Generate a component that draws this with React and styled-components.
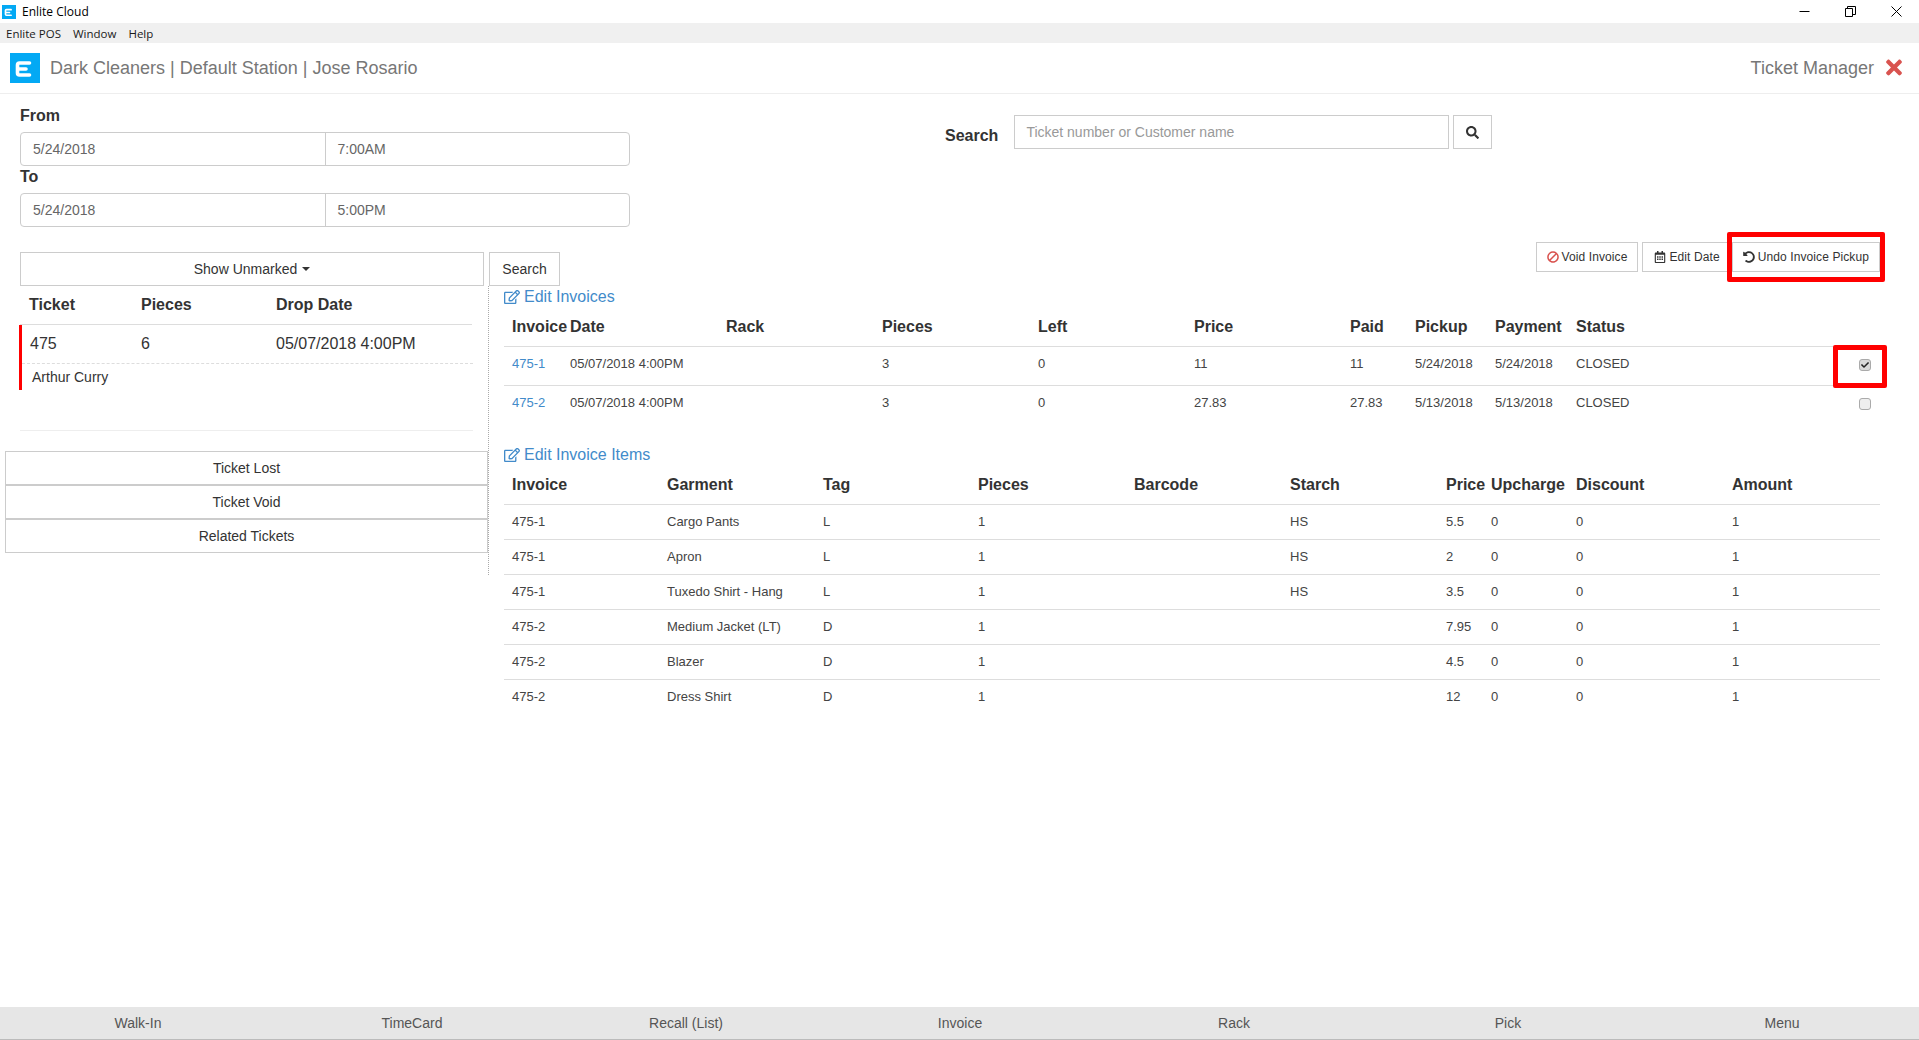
import React from "react";
import styled, { createGlobalStyle } from "styled-components";
import { FaBan, FaCheck, FaRegCalendarAlt, FaRegEdit, FaSearch, FaTimes, FaUndoAlt } from "react-icons/fa";

const GlobalStyle = createGlobalStyle`
  html, body { margin: 0; padding: 0; height: 100%; overflow: hidden; background: #fff; }
  * { box-sizing: border-box; }
  body {
    font-family: "Liberation Sans", Arial, sans-serif;
    font-size: 14px;
    color: #333;
  }
`;

const Page = styled.div`
  display: flex;
  flex-direction: column;
  height: 1040px;
`;

const TitleBar = styled.div`
  display: flex;
  align-items: center;
  height: 23px;
  padding-left: 2px;
  font-family: "Open Sans", "Noto Sans", sans-serif;
  font-size: 12px;
  color: #000;
`;

const TitleText = styled.span`
  margin-left: 6px;
  flex: 1;
`;

const WindowControl = styled.span`
  display: flex;
  justify-content: center;
  width: 46px;
`;

const MenuBar = styled.div`
  display: flex;
  align-items: center;
  gap: 12px;
  height: 20px;
  padding-left: 6px;
  background: #f0f0f0;
  font-family: "Open Sans", "Noto Sans", sans-serif;
  font-size: 11.5px;
  color: #1a1a1a;
`;

const Header = styled.div`
  display: flex;
  align-items: center;
  height: 51px;
  padding: 0 17px 0 10px;
  border-bottom: 1px solid #eee;
  font-size: 18px;
  color: #777;
`;

const HeaderTitle = styled.span`
  margin-left: 10px;
  flex: 1;
`;

const CloseIcon = styled(FaTimes)`
  margin: -2px 0 0 12px;
  width: 16px;
  height: 23px;
  color: #d9534f;
`;

const TopRow = styled.div`
  display: flex;
  align-items: flex-start;
  padding: 11px 0 0 20px;
`;

const DateFilters = styled.div`
  width: 610px;
`;

const Label = styled.div`
  font-size: 16px;
  font-weight: bold;
  line-height: 21px;
`;

const FieldGroup = styled.div`
  display: flex;
  height: 34px;
  margin: 6px 0 0;
  border: 1px solid #ccc;
  border-radius: 4px;
  color: #666;
  font-size: 14px;
`;

const FieldPart = styled.div`
  flex: 1;
  display: flex;
  align-items: center;
  padding-left: 12px;
  & + & {
    border-left: 1px solid #ccc;
  }
`;

const SearchBlock = styled.div`
  display: flex;
  align-items: flex-start;
  margin: 10px 0 0 315px;
`;

const SearchLabel = styled(Label)`
  margin: 10px 16px 0 0;
`;

const SearchInput = styled.div`
  display: flex;
  align-items: center;
  width: 435px;
  height: 34px;
  padding: 0 11px;
  border: 1px solid #ccc;
  color: #999;
  font-size: 14px;
`;

const SearchButton = styled.button`
  display: flex;
  align-items: center;
  justify-content: center;
  width: 39px;
  height: 34px;
  margin-left: 4px;
  padding: 0;
  background: #fff;
  border: 1px solid #ccc;
  color: #333;
  font-size: 13px;
`;

const ControlRow = styled.div`
  display: flex;
  justify-content: space-between;
  height: 44px;
  margin-top: 15px;
  padding-right: 39px;
`;

const Filter = styled.div`
  display: flex;
  margin-top: 10px;
  padding-left: 20px;
`;

const PlainButton = styled.button`
  display: flex;
  align-items: center;
  justify-content: center;
  height: 34px;
  width: ${(p) => p.$width || "auto"};
  padding: 0;
  background: #fff;
  border: 1px solid #ccc;
  color: #333;
  font-family: inherit;
  font-size: 14px;
`;

const Caret = styled.span`
  margin-left: 5px;
  border-top: 4px solid #333;
  border-left: 4px solid transparent;
  border-right: 4px solid transparent;
`;

const FilterSearch = styled(PlainButton)`
  margin-left: 5px;
`;

const Actions = styled.div`
  display: flex;
  gap: 4px;
  height: 30px;
`;

const ActionButton = styled.button`
  position: relative;
  display: flex;
  align-items: center;
  gap: 3px;
  height: 30px;
  padding: 0 ${(p) => p.$pad || 10}px;
  margin-left: ${(p) => (p.$flush ? "-4px" : "0")};
  background: #fff;
  border: 1px solid #ccc;
  color: #333;
  font-family: inherit;
  font-size: 12px;
  letter-spacing: 0.1px;
  white-space: nowrap;

  svg {
    width: 12px;
    height: 12px;
    color: ${(p) => p.$iconColor || "#333"};
  }
`;

const BanIcon = styled(FaBan)`
  transform: scaleX(-1);
`;

const Highlight = styled.span`
  position: absolute;
  top: ${(p) => p.$top}px;
  right: ${(p) => p.$right}px;
  bottom: ${(p) => p.$bottom}px;
  left: ${(p) => p.$left}px;
  border: 5px solid #f00;
  border-radius: 2px;
  pointer-events: none;
`;

const Content = styled.div`
  display: flex;
  align-items: flex-start;
`;

const LeftPanel = styled.div`
  width: 489px;
  height: 289px;
  flex-shrink: 0;
  border-right: 1px dotted #aaa;
`;

const TicketGrid = styled.div`
  display: grid;
  grid-template-columns: 112px 135px 1fr;
  margin: 0 16px 0 20px;
  padding-left: 9px;
`;

const TicketHead = styled(TicketGrid)`
  height: 39px;
  align-items: center;
  border-bottom: 1px solid #ddd;
  font-size: 16px;
  font-weight: bold;
`;

const TicketCard = styled.div`
  margin: 0 15px 0 19px;
  border-left: 3px solid #f00;
  height: 65px;
`;

const TicketRow = styled(TicketGrid)`
  grid-template-columns: 111px 135px 1fr;
  margin: 0;
  padding-left: 8px;
  height: 39px;
  align-items: center;
  border-bottom: 1px dashed #ddd;
  font-size: 16px;
`;

const TicketName = styled.div`
  padding: 5px 0 0 10px;
  font-size: 14px;
`;

const Divider = styled.div`
  margin: 40px 15px 0 20px;
  border-top: 1px solid #eee;
`;

const SideButtons = styled.div`
  display: flex;
  flex-direction: column;
  margin: 20px 0 0 5px;
  width: 483px;
`;

const RightPanel = styled.div`
  flex: 1;
  min-width: 0;
  padding: 0 39px 0 15px;
`;

const SectionLink = styled.a`
  display: flex;
  align-items: center;
  gap: 4px;
  height: 20px;
  padding-top: 1px;
  margin-top: ${(p) => p.$top || 0}px;
  color: #428bca;
  font-size: 16px;

  svg {
    width: 16px;
    height: 16px;
  }
`;

const Table = styled.table`
  width: 100%;
  table-layout: fixed;
  border-collapse: collapse;
  font-size: 13px;
  color: #444;
`;

const Column = styled.col`
  width: ${(p) => p.$width}px;
`;

const Th = styled.th`
  height: 40px;
  padding: 2px 0 0 8px;
  border-bottom: 1px solid #ddd;
  color: #333;
  font-size: 16px;
  text-align: left;
  white-space: nowrap;
`;

const Tr = styled.tr`
  height: ${(p) => p.$height}px;
  border-bottom: 1px solid #ddd;

  &:last-child {
    border-bottom: none;
  }
`;

const Td = styled.td`
  padding: 8px 0 0 8px;
  vertical-align: top;
  white-space: nowrap;
  line-height: 18px;
`;

const InvoiceLink = styled.a`
  color: #428bca;
`;

const StatusLine = styled.div`
  display: flex;
  justify-content: space-between;
  align-items: flex-start;
  padding-right: 9px;
`;

const CheckBox = styled.span`
  position: relative;
  display: inline-flex;
  align-items: center;
  justify-content: center;
  width: 12px;
  height: 12px;
  margin-top: 4px;
  background: ${(p) => (p.$checked ? "#d8d8d8" : "#eee")};
  border: 1px solid #aaa;
  border-radius: 3px;

  svg {
    width: 8px;
    height: 8px;
    color: #222;
  }
`;

const Spacer = styled.div`
  flex: 1;
`;

const BottomBar = styled.div`
  display: flex;
  height: 33px;
  padding-left: 1px;
  background: #e6e6e6;
  border-bottom: 1px solid #bbb;
`;

const BottomItem = styled.div`
  flex: 1;
  display: flex;
  align-items: center;
  justify-content: center;
  color: #555;
  font-size: 14px;
`;

const Logo = ({ size }) => (
  <svg width={size} height={size} viewBox="0 0 30 30" style={{ flexShrink: 0 }}>
    <rect width="30" height="30" fill="#03a9f4" />
    <path d="M19.5 10 H9.5 Q7.5 10 7.5 12 V20 Q7.5 22 9.5 22 H19.5 M8 16 H16" fill="none" stroke="#fff" strokeWidth="3.6" strokeLinecap="round" strokeLinejoin="round" />
  </svg>
);

const invoiceColumns = [58, 156, 156, 156, 156, 156, 65, 80, 81, 312];
const invoiceHeads = ["Invoice", "Date", "Rack", "Pieces", "Left", "Price", "Paid", "Pickup", "Payment", "Status"];
const invoices = [
  { id: "475-1", date: "05/07/2018 4:00PM", pieces: 3, left: 0, price: "11", paid: "11", pickup: "5/24/2018", payment: "5/24/2018", checked: true },
  { id: "475-2", date: "05/07/2018 4:00PM", pieces: 3, left: 0, price: "27.83", paid: "27.83", pickup: "5/13/2018", payment: "5/13/2018" },
];

const itemColumns = [155, 156, 155, 156, 156, 156, 45, 85, 156, 156];
const itemHeads = ["Invoice", "Garment", "Tag", "Pieces", "Barcode", "Starch", "Price", "Upcharge", "Discount", "Amount"];
const items = [
  ["475-1", "Cargo Pants", "L", "HS", "5.5"],
  ["475-1", "Apron", "L", "HS", "2"],
  ["475-1", "Tuxedo Shirt - Hang", "L", "HS", "3.5"],
  ["475-2", "Medium Jacket (LT)", "D", "", "7.95"],
  ["475-2", "Blazer", "D", "", "4.5"],
  ["475-2", "Dress Shirt", "D", "", "12"],
];

const bottomItems = ["Walk-In", "TimeCard", "Recall (List)", "Invoice", "Rack", "Pick", "Menu"];

const App = () => (
  <Page>
    <GlobalStyle />
    <TitleBar>
      <Logo size={14} />
      <TitleText>Enlite Cloud</TitleText>
      <WindowControl>
        <svg width="11" height="11" viewBox="0 0 11 11"><path d="M0.5 5.5 H10.5" stroke="#000" /></svg>
      </WindowControl>
      <WindowControl>
        <svg width="11" height="11" viewBox="0 0 11 11" fill="none" stroke="#000"><path d="M0.5 2.5 H7.5 V10.5 H0.5 Z M2.5 2.5 V0.5 H10.5 V8.5 H7.5" /></svg>
      </WindowControl>
      <WindowControl>
        <svg width="11" height="11" viewBox="0 0 11 11" stroke="#000"><path d="M0.5 0.5 L10.5 10.5 M10.5 0.5 L0.5 10.5" /></svg>
      </WindowControl>
    </TitleBar>
    <MenuBar>
      <span>Enlite POS</span>
      <span>Window</span>
      <span>Help</span>
    </MenuBar>
    <Header>
      <Logo size={30} />
      <HeaderTitle>Dark Cleaners | Default Station | Jose Rosario</HeaderTitle>
      <span>Ticket Manager</span>
      <CloseIcon />
    </Header>

    <TopRow>
      <DateFilters>
        <Label>From</Label>
        <FieldGroup>
          <FieldPart>5/24/2018</FieldPart>
          <FieldPart>7:00AM</FieldPart>
        </FieldGroup>
        <Label>To</Label>
        <FieldGroup>
          <FieldPart>5/24/2018</FieldPart>
          <FieldPart>5:00PM</FieldPart>
        </FieldGroup>
      </DateFilters>
      <SearchBlock>
        <SearchLabel>Search</SearchLabel>
        <SearchInput>Ticket number or Customer name</SearchInput>
        <SearchButton><FaSearch /></SearchButton>
      </SearchBlock>
    </TopRow>

    <ControlRow>
      <Filter>
        <PlainButton $width="464px">Show Unmarked<Caret /></PlainButton>
        <FilterSearch $width="71px">Search</FilterSearch>
      </Filter>
      <Actions>
        <ActionButton $iconColor="#d9534f"><BanIcon />Void Invoice</ActionButton>
        <ActionButton $pad={11}><FaRegCalendarAlt />Edit Date</ActionButton>
        <ActionButton $flush $pad={10}>
          <FaUndoAlt />Undo Invoice Pickup
          <Highlight $top={-11} $right={-6} $bottom={-11} $left={-6} />
        </ActionButton>
      </Actions>
    </ControlRow>

    <Content>
      <LeftPanel>
        <TicketHead>
          <span>Ticket</span>
          <span>Pieces</span>
          <span>Drop Date</span>
        </TicketHead>
        <TicketCard>
          <TicketRow>
            <span>475</span>
            <span>6</span>
            <span>05/07/2018 4:00PM</span>
          </TicketRow>
          <TicketName>Arthur Curry</TicketName>
        </TicketCard>
        <Divider />
        <SideButtons>
          <PlainButton>Ticket Lost</PlainButton>
          <PlainButton>Ticket Void</PlainButton>
          <PlainButton>Related Tickets</PlainButton>
        </SideButtons>
      </LeftPanel>

      <RightPanel>
        <SectionLink><FaRegEdit />Edit Invoices</SectionLink>
        <Table>
          <colgroup>
            {invoiceColumns.map((width, index) => <Column key={index} $width={width} />)}
          </colgroup>
          <thead>
            <tr>
              {invoiceHeads.map((head) => <Th key={head}>{head}</Th>)}
            </tr>
          </thead>
          <tbody>
            {invoices.map((invoice) => (
              <Tr key={invoice.id} $height={39}>
                <Td><InvoiceLink>{invoice.id}</InvoiceLink></Td>
                <Td>{invoice.date}</Td>
                <Td />
                <Td>{invoice.pieces}</Td>
                <Td>{invoice.left}</Td>
                <Td>{invoice.price}</Td>
                <Td>{invoice.paid}</Td>
                <Td>{invoice.pickup}</Td>
                <Td>{invoice.payment}</Td>
                <Td>
                  <StatusLine>
                    CLOSED
                    <CheckBox $checked={invoice.checked}>
                      {invoice.checked && <FaCheck />}
                      {invoice.checked && <Highlight $top={-15} $right={-17} $bottom={-18} $left={-27} />}
                    </CheckBox>
                  </StatusLine>
                </Td>
              </Tr>
            ))}
          </tbody>
        </Table>

        <SectionLink $top={20}><FaRegEdit />Edit Invoice Items</SectionLink>
        <Table>
          <colgroup>
            {itemColumns.map((width, index) => <Column key={index} $width={width} />)}
          </colgroup>
          <thead>
            <tr>
              {itemHeads.map((head) => <Th key={head}>{head}</Th>)}
            </tr>
          </thead>
          <tbody>
            {items.map((item, index) => (
              <Tr key={index} $height={35}>
                <Td>{item[0]}</Td>
                <Td>{item[1]}</Td>
                <Td>{item[2]}</Td>
                <Td>1</Td>
                <Td />
                <Td>{item[3]}</Td>
                <Td>{item[4]}</Td>
                <Td>0</Td>
                <Td>0</Td>
                <Td>1</Td>
              </Tr>
            ))}
          </tbody>
        </Table>
      </RightPanel>
    </Content>

    <Spacer />
    <BottomBar>
      {bottomItems.map((item) => <BottomItem key={item}>{item}</BottomItem>)}
    </BottomBar>
  </Page>
);

export default App;
